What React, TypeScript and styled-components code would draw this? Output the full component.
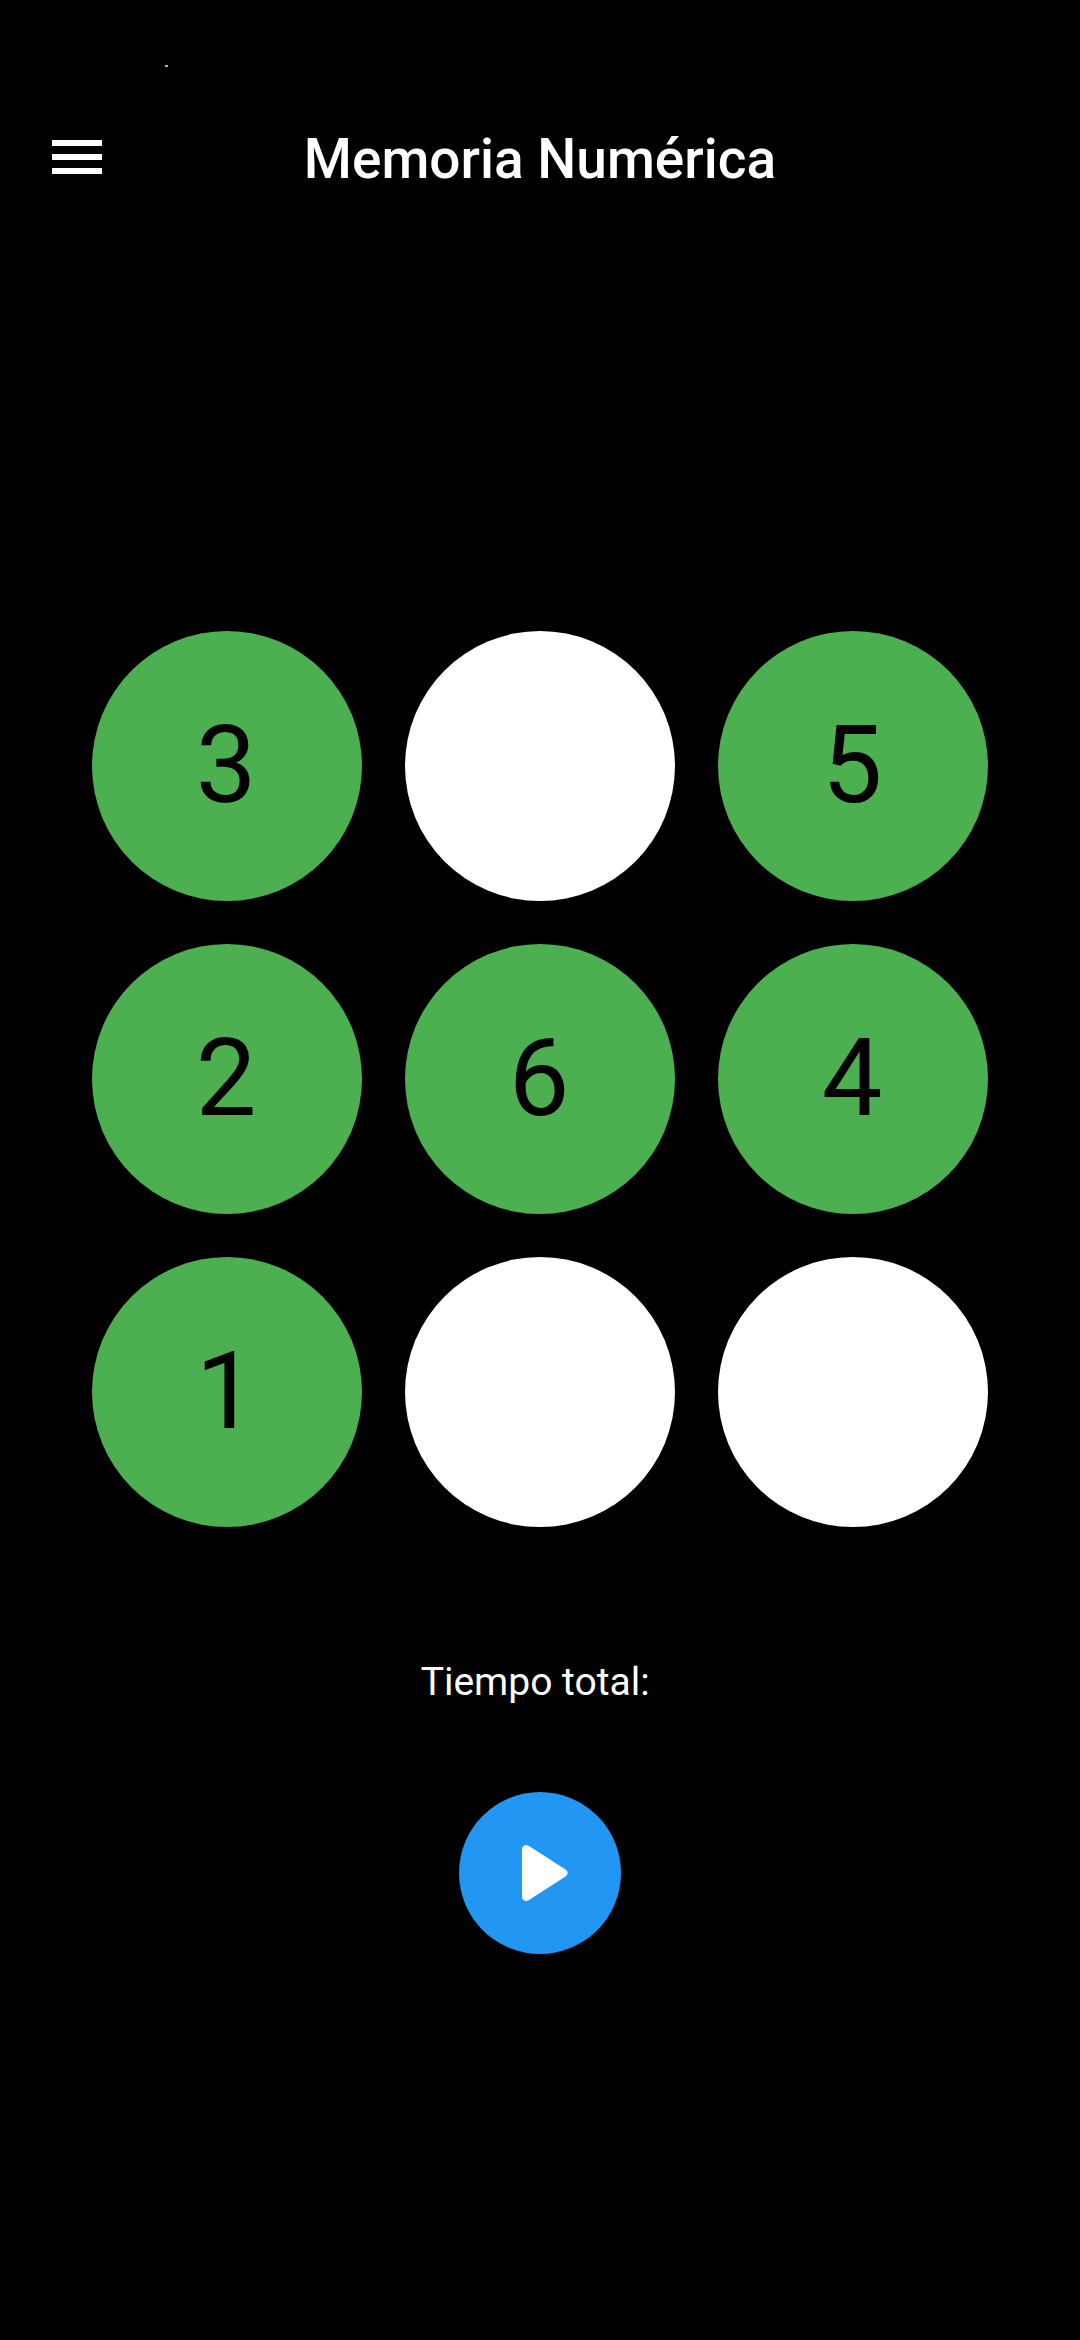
import React, { useState } from "react";
import styled, { createGlobalStyle } from "styled-components";

const GlobalStyle = createGlobalStyle`
  * {
    box-sizing: border-box;
  }
  body {
    margin: 0;
    background: #000;
    color: #fff;
    font-family: Roboto, "Noto Sans", sans-serif;
  }
  button {
    margin: 0;
    padding: 0;
    border: 0;
    font: inherit;
    cursor: pointer;
  }
`;

const Page = styled.div`
  display: flex;
  flex-direction: column;
  min-height: 100vh;
`;

const StatusBar = styled.div`
  height: 78px;
  padding: 65px 0 0 165px;
`;

const StatusMark = styled.div`
  width: 3px;
  height: 2px;
  background: #b0b0b0;
`;

const AppBar = styled.header`
  display: grid;
  grid-template-columns: 154px 1fr 154px;
  align-items: center;
  height: 158px;
`;

const MenuButton = styled.button`
  display: grid;
  place-items: center;
  height: 100%;
  background: none;
  color: #fff;
`;

const Title = styled.h1`
  margin: 0;
  padding-top: 4px;
  font-size: 55px;
  font-weight: 500;
  line-height: 66px;
  text-align: center;
`;

const Game = styled.main`
  flex: 1;
  display: flex;
  flex-direction: column;
  justify-content: center;
  align-items: center;
  padding-top: 8px;
`;

const Board = styled.div`
  display: grid;
  grid-template-columns: repeat(3, 1fr);
  gap: 43px;
  width: 100%;
  padding: 0 92px;
`;

const Cell = styled.button<{ $revealed: boolean }>`
  display: grid;
  place-items: center;
  aspect-ratio: 1;
  border-radius: 50%;
  background: ${(p) => (p.$revealed ? "#4caf50" : "#fff")};
  color: #000;
  && {
    padding: 0 2px 2px 0;
    font-size: 108px;
    line-height: 126px;
  }
`;

const TotalTime = styled.p`
  margin: 132px 0 87px;
  font-size: 39px;
  line-height: 46px;
  white-space: pre;
`;

const PlayButton = styled.button`
  display: grid;
  place-items: center;
  width: 162px;
  height: 162px;
  border-radius: 50%;
  background: #2196f3;
  color: #fff;
`;

const cells: (number | null)[] = [3, null, 5, 2, 6, 4, 1, null, null];

export default function App() {
  const [time, setTime] = useState("");

  return (
    <>
      <GlobalStyle />
      <Page>
        <StatusBar aria-hidden="true">
          <StatusMark />
        </StatusBar>
        <AppBar>
          <MenuButton aria-label="Menú">
            <svg width="50" height="34" viewBox="0 0 50 34" fill="currentColor">
              <rect width="50" height="6" />
              <rect y="14" width="50" height="6" />
              <rect y="28" width="50" height="6" />
            </svg>
          </MenuButton>
          <Title>Memoria Numérica</Title>
        </AppBar>
        <Game>
          <Board>
            {cells.map((value, i) => (
              <Cell
                key={i}
                $revealed={value !== null}
                aria-label={`Casilla ${i + 1}`}
              >
                {value}
              </Cell>
            ))}
          </Board>
          <TotalTime>{`Tiempo total: ${time}`}</TotalTime>
          <PlayButton aria-label="Jugar" onClick={() => setTime("")}>
            <svg width="68" height="68" viewBox="0 0 68 68" fill="currentColor">
              <path d="M16 10.500 Q16 6.500 20 6 Q21.500 6 23 7 L59.500 30.500 Q64 34 59.500 37.500 L23 61 Q21.500 62 20 62 Q16 61.500 16 57.500 Z" />
            </svg>
          </PlayButton>
        </Game>
      </Page>
    </>
  );
}
